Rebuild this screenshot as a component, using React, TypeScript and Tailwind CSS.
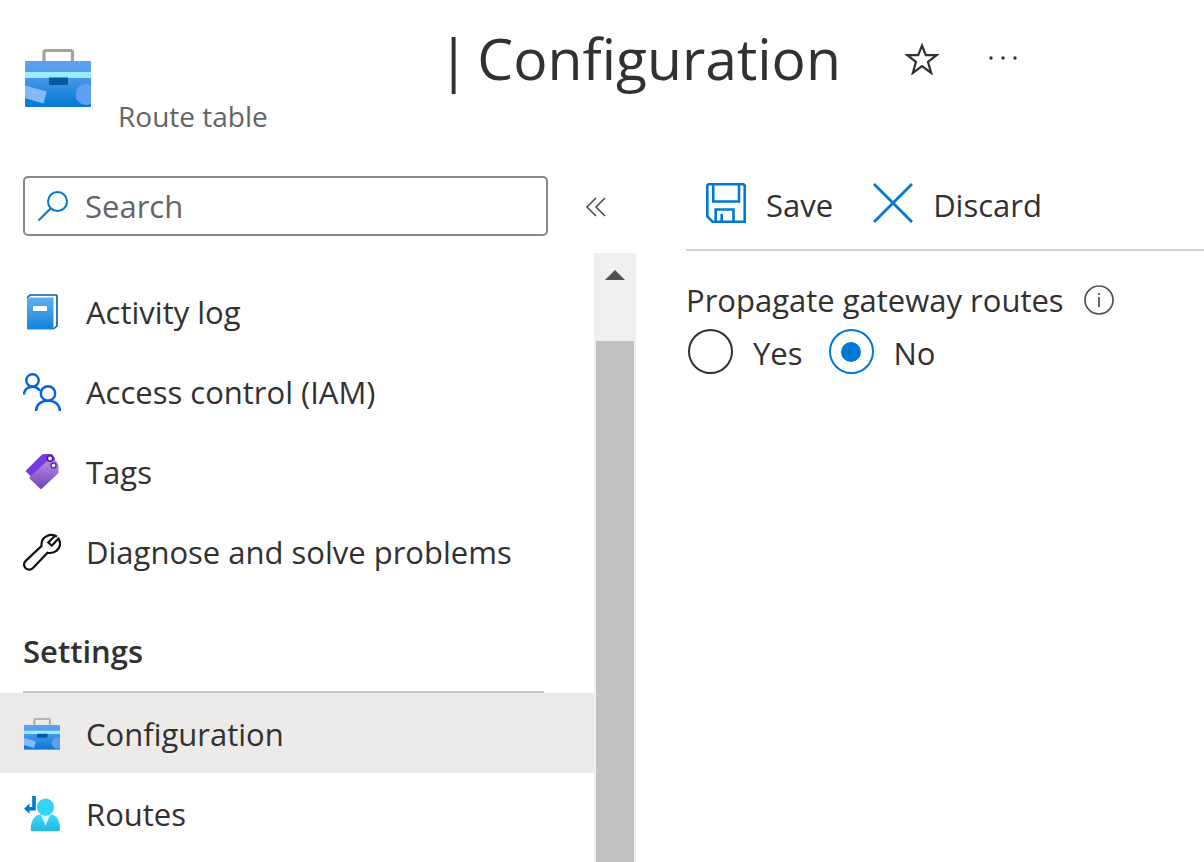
import { useState } from 'react';
import type { ReactNode } from 'react';

function ToolboxIcon({ id, className }: { id: string; className: string }) {
  return (
    <svg viewBox="0 0 66 58" className={className} aria-hidden="true">
      <defs>
        <linearGradient id={id} x1="0" y1="0" x2="0" y2="1">
          <stop offset="0" stopColor="#5ea0ef" />
          <stop offset="0.25" stopColor="#559ded" />
          <stop offset="1" stopColor="#0078d4" />
        </linearGradient>
        <clipPath id={`${id}-clip`}>
          <rect x="0" y="12" width="66" height="46" rx="1.2" />
        </clipPath>
      </defs>
      <path d="M19 12V3.5Q19 1.5 21 1.5H45.5Q47.5 1.5 47.5 3.5V12" fill="none" stroke="#a3a3a3" strokeWidth="3.2" />
      <g clipPath={`url(#${id}-clip)`}>
        <rect x="0" y="12" width="66" height="46" fill={`url(#${id})`} />
        <rect x="0" y="23" width="66" height="6" fill="#9cebff" />
        <path d="M24 28.5H43V35Q43 36 42 36H25Q24 36 24 35Z" fill="#005ba1" />
        <path d="M0 36.5L21.7 42.5L18.5 54.5L0 49Z" fill="#83b9f9" />
        <circle cx="61" cy="45.5" r="10.5" fill="#5ea0ef" />
      </g>
    </svg>
  );
}

function LogIcon() {
  return (
    <svg viewBox="0 0 38 38" className="size-[38px]" aria-hidden="true">
      <defs>
        <linearGradient id="log" x1="0" y1="0" x2="0" y2="1">
          <stop offset="0" stopColor="#5eb0f5" />
          <stop offset="1" stopColor="#1383d8" />
        </linearGradient>
      </defs>
      <path d="M4 5L7 2H33Q34 2 34 3V33L30.5 36" fill="#fff" stroke="#005ba1" strokeWidth="1.6" />
      <rect x="4" y="4.5" width="26.5" height="32" rx="0.8" fill="url(#log)" />
      <rect x="10" y="13" width="14" height="5" fill="#fff" />
    </svg>
  );
}

function PeopleIcon() {
  return (
    <svg viewBox="0 0 38 38" className="size-[38px]" fill="none" stroke="#0062e0" strokeWidth="2.4" aria-hidden="true">
      <circle cx="9.5" cy="7.4" r="6.2" />
      <path d="M1 21.4C1 16.9 4.5 13.7 9.5 13.7C13 13.7 15.5 15.2 17 17.9" />
      <circle cx="25" cy="20.4" r="7.2" />
      <path d="M13 37.9C13 31.9 18 27.6 25 27.6C32 27.6 37 31.9 37 37.9" />
    </svg>
  );
}

function TagsIcon() {
  return (
    <svg viewBox="0 0 38 38" className="size-[38px]" aria-hidden="true">
      <defs>
        <linearGradient id="tags" x1="0" y1="0" x2="0" y2="1">
          <stop offset="0" stopColor="#b98ae3" />
          <stop offset="1" stopColor="#6f43ba" />
        </linearGradient>
      </defs>
      <path d="M2.5 18L18.5 2Q19.5 1 21 1H28Q29 1 29.8 2L32 5.5V8.5L8 23.5Z" fill="#773adc" />
      <path d="M6.5 24L24 8.3Q25.5 7.5 27 7.5H32Q33 7.5 33.5 8.5L35.5 12V19Q35.5 20 34.5 21L19 35.5Q18 36.5 17 35.5L6.5 25.5Z" fill="url(#tags)" />
      <circle cx="27" cy="5.5" r="2.7" fill="#fff" stroke="#42179a" strokeWidth="1.5" />
      <circle cx="30.5" cy="12.5" r="2.5" fill="#fff" stroke="#5d2fb0" strokeWidth="1.5" />
    </svg>
  );
}

function WrenchIcon() {
  return (
    <svg viewBox="0 0 38 38" className="size-[38px]" fill="none" stroke="#111" strokeWidth="2.2" aria-hidden="true">
      <path d="M34 3.7C28 -0.3 18.3 3 18.5 11.8V13L2.7 27.9C0.5 30 0.6 33.2 2.6 35.2C4.7 37.2 8 37.1 10 35L24.5 19.8C31 21 37.5 16.5 37 10.5C36.9 8.5 36.5 7 35.5 5.5L28.8 12.8L25.3 9.5L31.5 3.2" />
    </svg>
  );
}

function RoutesIcon() {
  return (
    <svg viewBox="0 0 38 38" className="size-[38px]" aria-hidden="true">
      <defs>
        <linearGradient id="routes" x1="0" y1="0" x2="0" y2="1">
          <stop offset="0.2" stopColor="#32d4f5" />
          <stop offset="1" stopColor="#27b8dc" />
        </linearGradient>
      </defs>
      <path d="M7.7 35Q7.7 27 11 23Q13.5 19.5 18 19.5H27.5Q31.5 19.5 34 23Q37 27 37 34Q37 36.2 34.5 36.2H10Q7.7 36.2 7.700 35Z" fill="url(#routes)" />
      <path d="M17.5 19.5L22.5 30.5L27.5 19.5Z" fill="#d5f8ff" />
      <circle cx="22.5" cy="12.2" r="8.6" fill="#32d4f5" />
      <path d="M9.2 1H12.8V15.5H6.5V18.8L1 13.7L6.5 8.5V12H9.2Z" fill="#0078d4" />
    </svg>
  );
}

function SaveIcon() {
  return (
    <svg viewBox="0 0 40 40" className="size-10" fill="none" stroke="#0078d4" strokeWidth="2.6" aria-hidden="true">
      <path d="M2.5 1.3H37.5L38.7 2.5V38.7H6.5L1.3 33.5V2.5Z" />
      <path d="M7.2 1.3V18.5H33V1.3" />
      <path d="M9.7 38.7V26.5H27.5V38.7M15.7 38.7V31" />
    </svg>
  );
}

interface NavItem {
  label: string;
  icon: ReactNode;
}

const generalItems: NavItem[] = [
  { label: 'Activity log', icon: <LogIcon /> },
  { label: 'Access control (IAM)', icon: <PeopleIcon /> },
  { label: 'Tags', icon: <TagsIcon /> },
  { label: 'Diagnose and solve problems', icon: <WrenchIcon /> },
];

const settingsItems: NavItem[] = [
  { label: 'Configuration', icon: <ToolboxIcon id="toolbox-nav" className="mx-px h-8 w-9" /> },
  { label: 'Routes', icon: <RoutesIcon /> },
];

function NavList({ items, active, onSelect }: { items: NavItem[]; active: string; onSelect: (label: string) => void }) {
  return (
    <ul>
      {items.map((item) => (
        <li key={item.label}>
          <a
            href="#"
            aria-current={item.label === active ? 'page' : undefined}
            onClick={(e) => {
              e.preventDefault();
              onSelect(item.label);
            }}
            className={`flex h-20 items-center gap-6 pt-px pl-[23px] ${item.label === active ? 'bg-[#ecebe9]' : 'hover:bg-[#f3f2f1]'}`}
          >
            <span className="flex w-[39px] shrink-0 items-center">{item.icon}</span>
            <span className="whitespace-nowrap">{item.label}</span>
          </a>
        </li>
      ))}
    </ul>
  );
}

export default function App() {
  const [search, setSearch] = useState('');
  const [active, setActive] = useState('Configuration');
  const [propagate, setPropagate] = useState('No');

  return (
    <div className="flex h-screen flex-col overflow-hidden bg-white font-['Segoe_UI','Open_Sans',sans-serif] text-[31px] leading-10 text-[#323130]">
      {/* Header */}
      <header className="flex shrink-0 gap-[27px] pt-5 pl-[25px]">
        <ToolboxIcon id="toolbox-header" className="mt-[29px] h-[58px] w-[66px] shrink-0" />
        <div>
          <div className="ml-[320px] flex h-[76px] items-center">
            <h1 className="flex gap-2 text-[57px] leading-[74px] whitespace-nowrap">
              <span>|</span>
              <span>Configuration</span>
            </h1>
            <button type="button" aria-label="Add to favorites" className="ml-16">
              <svg viewBox="0 0 34 34" className="size-[34px]" fill="none" stroke="#323130" strokeWidth="2.2">
                <path d="M17 4.5L20.8 14.2H31.5L23 20.8L26.2 32L17 25.2L7.8 32L11 20.8L2.5 14.2H13.2Z" />
              </svg>
            </button>
            <button type="button" aria-label="More" className="ml-12">
              <svg viewBox="0 0 32 8" className="h-2 w-8" fill="#323130">
                <circle cx="4" cy="4" r="1.7" />
                <circle cx="16" cy="4" r="1.7" />
                <circle cx="28" cy="4" r="1.7" />
              </svg>
            </button>
          </div>
          <p className="text-[28px] leading-10 text-[#646464]">Route table</p>
        </div>
      </header>

      <div className="flex min-h-0 flex-1 pt-10">
        {/* Resource menu */}
        <aside className="flex w-[636px] shrink-0 flex-col">
          <div className="flex items-center pl-[23px]">
            <label className="flex h-[60px] w-[525px] items-center gap-4 rounded-[5px] border-2 border-[#8a8886] pl-3">
              <svg viewBox="0 0 32 32" className="size-8 shrink-0" fill="none" stroke="#0078d4" strokeWidth="2" aria-hidden="true">
                <circle cx="20.5" cy="11.5" r="9.5" />
                <path d="M13.8 18.2L1.5 30.5" />
              </svg>
              <input
                type="text"
                aria-label="Search"
                placeholder="Search"
                value={search}
                onChange={(e) => setSearch(e.target.value)}
                className="w-full min-w-0 bg-transparent placeholder-[#646464] outline-none"
              />
            </label>
            <button type="button" aria-label="Collapse menu" className="ml-9 pt-[2px]">
              <svg viewBox="0 0 24 20" className="h-5 w-6" fill="none" stroke="#484644" strokeWidth="1.5">
                <path d="M12 1L3 10L12 19M21 1L12 10L21 19" />
              </svg>
            </button>
          </div>

          <div className="mt-[17px] flex min-h-0 flex-1">
            <nav className="min-w-0 flex-1 overflow-hidden pt-[18px]">
              <NavList items={generalItems} active={active} onSelect={setActive} />
              <h2 className="mr-[50px] ml-[23px] flex h-[102px] items-center border-b-2 border-[#c8c8c8] pt-5 font-semibold">
                Settings
              </h2>
              <NavList items={settingsItems} active={active} onSelect={setActive} />
            </nav>
            <div className="flex w-[42px] shrink-0 flex-col items-center bg-[#f0f0f0]">
              <button type="button" aria-label="Scroll up" className="flex h-[88px] w-full justify-center pt-[17px]">
                <svg viewBox="0 0 20 10" className="h-[10px] w-5" fill="#505050">
                  <path d="M10 0L20 10H0Z" />
                </svg>
              </button>
              <div className="w-[38px] flex-1 bg-[#c1c1c1]" />
            </div>
          </div>
        </aside>

        {/* Configuration pane */}
        <main className="ml-[50px] min-w-0 flex-1">
          <div className="flex h-[75px] items-start gap-10 border-b-2 border-[#d2d2d2] pt-[5px] pl-5">
            <button type="button" className="flex items-center gap-5">
              <SaveIcon />
              <span className="pt-1">Save</span>
            </button>
            <button type="button" className="flex items-center gap-5">
              <svg viewBox="0 0 40 40" className="size-10" fill="none" stroke="#0078d4" strokeWidth="2.8" aria-hidden="true">
                <path d="M1 1L39 39M39 1L1 39" />
              </svg>
              <span className="pt-1">Discard</span>
            </button>
          </div>

          <fieldset className="mt-[29px]">
            <legend className="flex items-center gap-5 whitespace-nowrap">
              Propagate gateway routes
              <svg viewBox="0 0 30 30" className="size-[30px] shrink-0" fill="none" stroke="#505050" strokeWidth="1.7" aria-hidden="true">
                <circle cx="15" cy="15" r="14" />
                <path d="M15 12V22M15 8V10" />
              </svg>
            </legend>
            <div className="mt-[9px] flex gap-[26px] pl-[2px]">
              {['Yes', 'No'].map((option) => (
                <label key={option} className="flex items-center gap-5">
                  <input
                    type="radio"
                    name="propagate"
                    value={option}
                    checked={propagate === option}
                    onChange={() => setPropagate(option)}
                    className="grid size-[45px] shrink-0 appearance-none place-content-center rounded-full border-2 border-[#323130] before:size-5 before:rounded-full checked:border-[#0078d4] checked:before:bg-[#0078d4]"
                  />
                  <span className="pt-[2px]">{option}</span>
                </label>
              ))}
            </div>
          </fieldset>
        </main>
      </div>
    </div>
  );
}
